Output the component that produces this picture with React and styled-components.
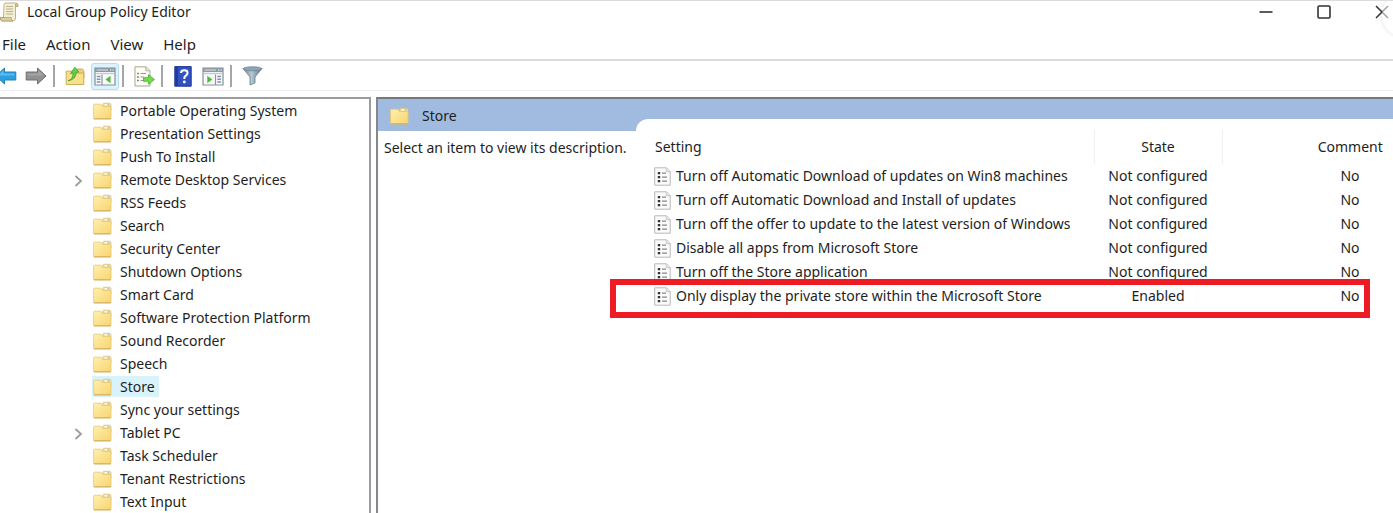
import React from 'react';
import styled, { createGlobalStyle } from 'styled-components';

const GlobalStyle = createGlobalStyle`
  * { box-sizing: border-box; }
  body {
    margin: 0;
    background: #fff;
    color: #1e1e22;
    font: 14px/20px "Noto Sans", "Open Sans", sans-serif;
  }
  button { font: inherit; color: inherit; background: none; border: 0; padding: 0; }
  svg { display: block; flex: none; }
`;

const Window = styled.div`
  min-height: 100vh;
  display: flex;
  flex-direction: column;
  border-top: 1px solid #dcdcdc;
  overflow: hidden;
`;

const TitleBar = styled.header`
  position: relative;
  display: flex;
  align-items: center;
  height: 22px;
  gap: 8px;
`;

const Title = styled.h1`
  margin: 0;
  flex: 1;
  font-size: 14px;
  font-weight: 400;
`;

const WindowControls = styled.div`
  display: flex;
  gap: 40px;
  margin-right: 2px;
`;

const ControlButton = styled.button`
  width: 18px;
  height: 18px;
  display: grid;
  place-items: center;
`;

const CornerBubble = styled.div`
  position: absolute;
  top: -8px;
  right: -33px;
  width: 44px;
  height: 44px;
  border-radius: 50%;
  background: rgba(255, 255, 255, 0.55);
  box-shadow: 0 0 4px rgba(0, 0, 0, 0.14);
  pointer-events: none;
`;

const MenuBar = styled.nav`
  display: flex;
  align-items: center;
  gap: 20px;
  height: 38px;
  padding: 6px 2px 0;
  font-size: 15px;
  border-bottom: 2px solid #dadada;
`;

const Toolbar = styled.div`
  display: flex;
  align-items: center;
  height: 30px;
  padding-top: 1px;
  border-bottom: 1px solid #eee;
`;

const ToolButton = styled.button`
  width: 28px;
  height: 27px;
  display: grid;
  place-items: center;
  border-radius: 3px;
  border: 1px solid ${(p) => (p.$active ? '#b5def2' : 'transparent')};
  background: ${(p) => (p.$active ? '#dcf3fd' : 'none')};
  margin-left: ${(p) => p.$before || 0}px;
`;

const Separator = styled.span`
  width: 2px;
  height: 22px;
  margin: 0 4px 0 3px;
  background: #a6a6a6;
`;

const Panes = styled.main`
  flex: 1;
  display: grid;
  grid-template-columns: 371px minmax(0, 1fr);
  gap: 5px;
  margin-top: 6px;
`;

const TreePane = styled.aside`
  border-top: 2px solid #9a9ca2;
  border-right: 2px solid #9a9ca2;
`;

const Tree = styled.ul`
  list-style: none;
  margin: 0;
  padding: 0 0 0 74px;
`;

const TreeRow = styled.li`
  display: flex;
  align-items: center;
  height: 23px;
`;

const Expander = styled.span`
  width: 18px;
  padding-top: 2px;
`;

const TreeItem = styled.button`
  display: flex;
  align-items: center;
  gap: 8px;
  height: 21px;
  padding: 0 4px 0 1px;
  background: ${(p) => (p.$selected ? '#d9f3fc' : 'none')};
`;

const DetailPane = styled.section`
  border-top: 2px solid #74777d;
  border-left: 2px solid #85878c;
  display: grid;
  grid-template-columns: 258px minmax(0, 1fr);
  grid-template-rows: 20px 1fr;
  background: #a0bbdf;
`;

const Banner = styled.div`
  grid-column: 1 / -1;
  display: flex;
  align-items: center;
  gap: 13px;
  height: 32px;
  padding: 2px 12px 0;
`;

const BannerTitle = styled.h2`
  margin: 0;
  font-size: 14px;
  font-weight: 400;
`;

const Description = styled.p`
  margin: 12px 0 0;
  padding: 7px 6px;
  background: #fff;
  white-space: nowrap;
`;

const ListPanel = styled.div`
  background: #fff;
  border-top-left-radius: 12px;
  padding-top: 11px;
`;

const SettingsTable = styled.table`
  width: 100%;
  border-collapse: collapse;
  table-layout: fixed;
`;

const HeaderCell = styled.th`
  width: ${(p) => p.$width || 'auto'};
  height: 34px;
  padding: ${(p) => p.$pad || '0'};
  font-weight: 400;
  text-align: ${(p) => p.$align || 'center'};
  border-right: ${(p) => (p.$last ? '0' : '1px solid #f0f0f0')};
`;

const Row = styled.tr`
  position: relative;
  ${(p) =>
    p.$marked &&
    `td:first-child::after {
      content: "";
      position: absolute;
      inset: -5px 23px -10px -26px;
      border: 6px solid #ed1c24;
      pointer-events: none;
    }`}
`;

const Cell = styled.td`
  height: 24px;
  padding: ${(p) => p.$pad || '0'};
  text-align: center;
  white-space: nowrap;
`;

const SettingName = styled.div`
  display: flex;
  align-items: center;
  gap: 5px;
`;

const FolderIcon = () => (
  <svg width="19" height="18" viewBox="0 0 19 18" aria-hidden="true">
    <defs>
      <linearGradient id="folder" x1="0" y1="0" x2="1" y2="1">
        <stop offset="0" stopColor="#fff0ae" />
        <stop offset="1" stopColor="#f8d470" />
      </linearGradient>
    </defs>
    <path d="M9 4.5 10.5 1.2H17L18 2.7V8H9Z" fill="#f0d994" stroke="#d9c078" strokeWidth=".7" />
    <path d="M11.5 2.8H16" stroke="#fff" strokeWidth="1.2" />
    <path d="M14.5 2.8H16" stroke="#8cb5c9" strokeWidth="1.2" />
    <path d="M.6 3Q.6 2.2 1.4 2.2H8l1.6 2.3H17.3Q18 4.5 18 5.3V16.2Q18 17 17.2 17H1.4Q.6 17 .6 16.2Z" fill="url(#folder)" stroke="#e5c873" strokeWidth=".8" />
    <path d="M1 16.8H17.8" stroke="#c6a253" strokeWidth=".8" />
  </svg>
);

const PolicyIcon = () => (
  <svg width="17" height="19" viewBox="0 0 17 19" aria-hidden="true">
    <path d="M.7.8H12.5L16.2 4.5V18.2H.7Z" fill="#fbfbfb" stroke="#b8b8b8" strokeWidth="1" />
    <path d="M12.3 1V4.7H16" fill="#eee" stroke="#bbb" strokeWidth=".8" />
    <path d="M3.8 5H6.2V7.2H3.8ZM3.8 9H6.2V11.2H3.8ZM3.8 13H6.2V15.2H3.8Z" fill="#333" />
    <path d="M8 6.2H12M8 10.2H13M8 14.2H13" stroke="#888" strokeWidth="1.2" />
  </svg>
);

const ScrollIcon = () => (
  <svg width="19" height="20" viewBox="0 0 19 20" aria-hidden="true">
    <path d="M4 2.5Q4 1 5.5 1H16Q18 1.5 17.8 4.5H15.5V16Q15.5 18.8 13 19H2Q0 18.5 .4 15.5H3.5Z" fill="#f4eed2" stroke="#b9aa7d" strokeWidth=".9" />
    <path d="M15.5 4.5V2.5Q15.8 1 17 1.3Q18.4 2 17.8 4.5Z" fill="#d8c994" stroke="#a7986a" strokeWidth=".7" />
    <path d="M.4 15.5H11.3Q10.8 18.5 13 19H2Q0 18.5 .4 15.5Z" fill="#ddcf9d" stroke="#a7986a" strokeWidth=".7" />
    <path d="M6 4.5H13M6 7H13M6 9.5H13M6 12H13" stroke="#b9b08f" strokeWidth="1" />
  </svg>
);

const ArrowIcon = ({ forward }) => (
  <svg width="22" height="18" viewBox="0 0 22 18" aria-hidden="true">
    <g transform={forward ? 'translate(22 0) scale(-1 1)' : undefined}>
      <path d="M1 9 9.5 1V5H20.8V13H9.5V17Z" fill={forward ? '#919191' : '#2b9fe0'} stroke={forward ? '#6e6e6e' : '#2380b8'} strokeWidth="1" strokeLinejoin="round" />
      <path d="M3 8.5 8.5 3.5V6.5H19.5V8.5Z" fill={forward ? '#a4a4a4' : '#5cbcf0'} />
    </g>
  </svg>
);

const UpFolderIcon = () => (
  <svg width="20" height="20" viewBox="0 0 20 20" aria-hidden="true">
    <path d="M10 5 11.5 3H17.5L19 5V12H10Z" fill="#edcf78" stroke="#c7a54c" strokeWidth=".8" />
    <path d="M1.2 5.2H8.5L10 7H18.8V18.5H1.2Z" fill="#f8df8b" stroke="#c9a549" strokeWidth=".9" />
    <path d="M3 14.8Q8 13.5 8.2 7L5.5 7.6 9.8 1.2 13.8 6 11.2 6.4Q11 13.5 3 14.8Z" fill="#5fd04b" stroke="#3aa52c" strokeWidth=".8" />
  </svg>
);

const ConsoleIcon = ({ right }) => (
  <svg width="22" height="19" viewBox="0 0 22 19" aria-hidden="true">
    <path d="M1 1H21V18H1Z" fill="#f8fafb" stroke="#84919c" strokeWidth="1.2" />
    <path d="M1 1H21V5H1Z" fill="#8d9aa6" />
    <path d="M2.5 3H14" stroke="#dce3e8" strokeWidth="1" />
    <path d="M16 3H17.3M18.5 3H19.8" stroke="#fff" strokeWidth="1.2" />
    <path d="M1.6 6.5H20.4" stroke="#c2cbd2" strokeWidth="1.4" />
    {right ? (
      <>
        <path d="M13.5 7.5V18" stroke="#8995a0" strokeWidth="1.2" />
        <path d="M15.3 9.5H19M15.3 12.3H19M15.3 15H19" stroke="#8495a5" strokeWidth="1.4" />
        <path d="M5.3 8.8 10.3 12.6 5.3 16.3Z" fill="#4dba3a" />
      </>
    ) : (
      <>
        <path d="M8 7.5V18" stroke="#8995a0" strokeWidth="1.2" />
        <path d="M2.8 9.5H6.5M2.8 12.3H6.5M2.8 15H6.5" stroke="#8495a5" strokeWidth="1.4" />
        <path d="M16.5 8.8 11.5 12.6 16.5 16.3Z" fill="#4dba3a" />
      </>
    )}
  </svg>
);

const ExportIcon = () => (
  <svg width="21" height="21" viewBox="0 0 21 21" aria-hidden="true">
    <path d="M1 .8H12L16 4.6V20H1Z" fill="#fdfcf4" stroke="#aaa793" strokeWidth="1" />
    <path d="M11.8 1V4.8H16" fill="#e9e6d6" stroke="#aaa793" strokeWidth=".8" />
    <path d="M3.3 7.5H4.7M3.3 11H4.7M3.3 14.5H4.7" stroke="#555" strokeWidth="1.5" />
    <path d="M6.5 7.5H12M6.5 11H10M6.5 14.5H10" stroke="#999" strokeWidth="1.2" />
    <path d="M9.5 11.7H14.5V8.7L20.5 13.5 14.5 18.2V15.3H9.5Z" fill="#74d94e" stroke="#4bab30" strokeWidth=".8" />
  </svg>
);

const HelpIcon = () => (
  <svg width="18" height="21" viewBox="0 0 18 21" aria-hidden="true">
    <path d="M.8.6H17.2V20.2H.8Z" fill="#3052c4" stroke="#1d368f" strokeWidth="1" />
    <path d="M1.3 1H3.8V20H1.3Z" fill="#1f3a9c" />
    <path d="M7 7Q7 4.2 10.3 4.2T13.5 7Q13.5 8.6 11.8 9.7T10.3 13" fill="none" stroke="#fff" strokeWidth="2.1" />
    <circle cx="10.3" cy="16" r="1.4" fill="#fff" />
  </svg>
);

const FilterIcon = () => (
  <svg width="21" height="20" viewBox="0 0 21 20" aria-hidden="true">
    <defs>
      <linearGradient id="funnel">
        <stop offset="0" stopColor="#6c8799" />
        <stop offset=".45" stopColor="#b4c9d5" />
        <stop offset="1" stopColor="#587084" />
      </linearGradient>
    </defs>
    <path d="M1 2.5 8 11V19L13 17V11L20 2.5Z" fill="url(#funnel)" stroke="#6b8090" strokeWidth=".8" />
    <ellipse cx="10.5" cy="2.8" rx="9.5" ry="2" fill="#8ea5b3" stroke="#718797" strokeWidth=".8" />
  </svg>
);

const Chevron = () => (
  <svg width="9" height="12" viewBox="0 0 9 12" aria-hidden="true">
    <path d="M1.5 1 7 6 1.5 11" fill="none" stroke="#999" strokeWidth="1.7" />
  </svg>
);

const folders = [
  { name: 'Portable Operating System' },
  { name: 'Presentation Settings' },
  { name: 'Push To Install' },
  { name: 'Remote Desktop Services', expandable: true },
  { name: 'RSS Feeds' },
  { name: 'Search' },
  { name: 'Security Center' },
  { name: 'Shutdown Options' },
  { name: 'Smart Card' },
  { name: 'Software Protection Platform' },
  { name: 'Sound Recorder' },
  { name: 'Speech' },
  { name: 'Store', selected: true },
  { name: 'Sync your settings' },
  { name: 'Tablet PC', expandable: true },
  { name: 'Task Scheduler' },
  { name: 'Tenant Restrictions' },
  { name: 'Text Input' },
];

const settings = [
  { name: 'Turn off Automatic Download of updates on Win8 machines', state: 'Not configured' },
  { name: 'Turn off Automatic Download and Install of updates', state: 'Not configured' },
  { name: 'Turn off the offer to update to the latest version of Windows', state: 'Not configured' },
  { name: 'Disable all apps from Microsoft Store', state: 'Not configured' },
  { name: 'Turn off the Store application', state: 'Not configured' },
  { name: 'Only display the private store within the Microsoft Store', state: 'Enabled', marked: true },
];

const LeadingTools = styled.div`
  display: flex;
  margin-left: -8px;
`;

export default function App() {
  return (
    <Window>
      <GlobalStyle />
      <TitleBar>
        <ScrollIcon />
        <Title>Local Group Policy Editor</Title>
        <WindowControls>
          <ControlButton aria-label="Minimize">
            <svg width="14" height="14" viewBox="0 0 14 14"><path d="M.5 7H13.5" stroke="#333" strokeWidth="1.6" /></svg>
          </ControlButton>
          <ControlButton aria-label="Maximize">
            <svg width="14" height="14" viewBox="0 0 14 14"><rect x="1" y="1" width="12" height="12" rx="1.2" fill="none" stroke="#333" strokeWidth="1.6" /></svg>
          </ControlButton>
          <ControlButton aria-label="Close">
            <svg width="14" height="14" viewBox="0 0 14 14"><path d="M1 1 13 13M13 1 1 13" stroke="#333" strokeWidth="1.5" /></svg>
          </ControlButton>
        </WindowControls>
        <CornerBubble />
      </TitleBar>
      <MenuBar>
        {['File', 'Action', 'View', 'Help'].map((m) => (
          <button key={m}>{m}</button>
        ))}
      </MenuBar>
      <Toolbar>
        <LeadingTools>
          <ToolButton aria-label="Back"><ArrowIcon /></ToolButton>
          <ToolButton aria-label="Forward" $before={2}><ArrowIcon forward /></ToolButton>
        </LeadingTools>
        <Separator />
        <ToolButton aria-label="Up one level" $before={2}><UpFolderIcon /></ToolButton>
        <ToolButton aria-label="Show or hide console tree" $active $before={2}><ConsoleIcon /></ToolButton>
        <Separator />
        <ToolButton aria-label="Export list" $before={2}><ExportIcon /></ToolButton>
        <Separator />
        <ToolButton aria-label="Help" $before={2}><HelpIcon /></ToolButton>
        <ToolButton aria-label="Show or hide action pane" $before={2}><ConsoleIcon right /></ToolButton>
        <Separator />
        <ToolButton aria-label="Filter" $before={2}><FilterIcon /></ToolButton>
      </Toolbar>
      <Panes>
        <TreePane>
          <Tree>
            {folders.map((f) => (
              <TreeRow key={f.name}>
                <Expander>{f.expandable && <Chevron />}</Expander>
                <TreeItem $selected={f.selected}>
                  <FolderIcon />
                  {f.name}
                </TreeItem>
              </TreeRow>
            ))}
          </Tree>
        </TreePane>
        <DetailPane>
          <Banner>
            <FolderIcon />
            <BannerTitle>Store</BannerTitle>
          </Banner>
          <Description>Select an item to view its description.</Description>
          <ListPanel>
            <SettingsTable>
              <thead>
                <tr>
                  <HeaderCell $align="left" $pad="0 0 0 19px">Setting</HeaderCell>
                  <HeaderCell $width="128px">State</HeaderCell>
                  <HeaderCell $width="171px" $pad="0 0 0 85px" $last>Comment</HeaderCell>
                </tr>
              </thead>
              <tbody>
                {settings.map((s) => (
                  <Row key={s.name} $marked={s.marked}>
                    <Cell $pad="0 0 0 18px">
                      <SettingName>
                        <PolicyIcon />
                        {s.name}
                      </SettingName>
                    </Cell>
                    <Cell>{s.state}</Cell>
                    <Cell $pad="0 0 0 85px">No</Cell>
                  </Row>
                ))}
              </tbody>
            </SettingsTable>
          </ListPanel>
        </DetailPane>
      </Panes>
    </Window>
  );
}
